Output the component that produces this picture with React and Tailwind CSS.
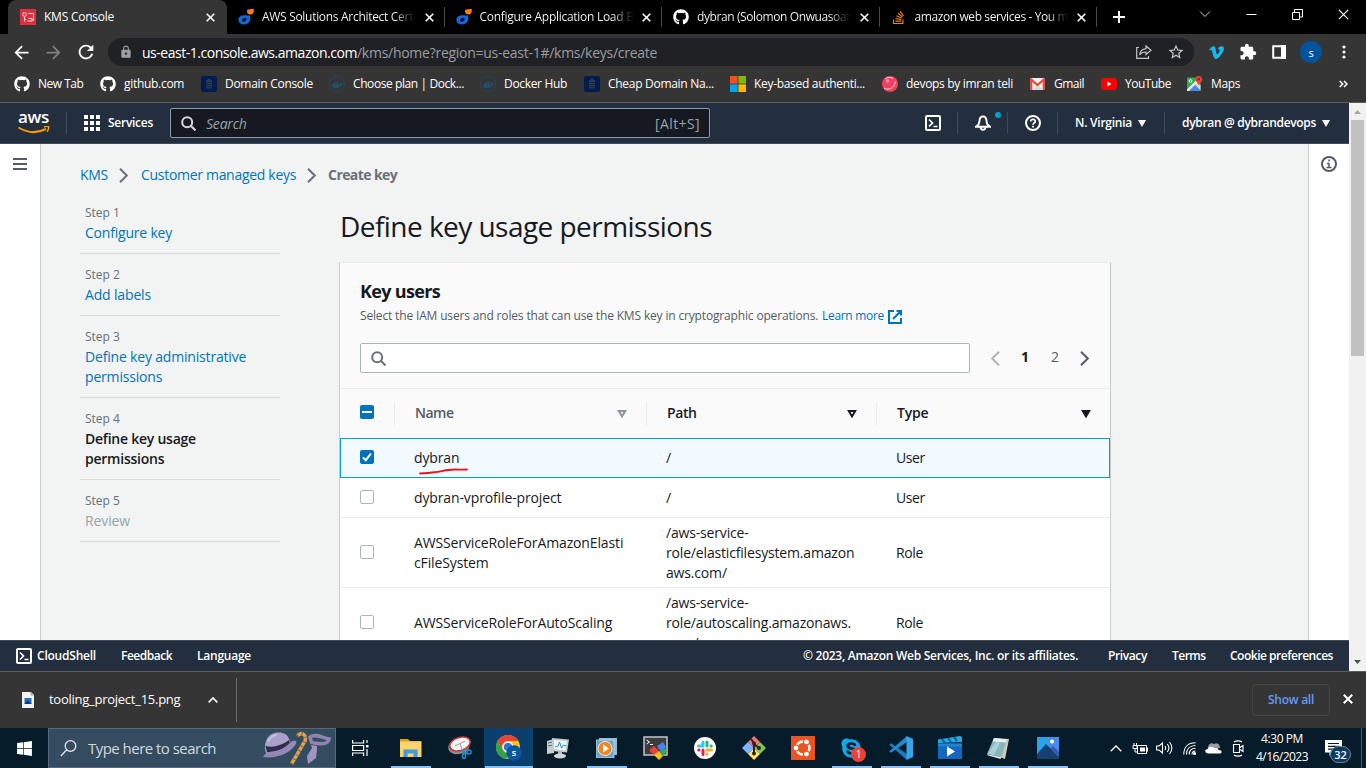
import { FaGithub, FaDocker, FaStackOverflow, FaSkype, FaVimeoV, FaWindows } from "react-icons/fa";
import { MdExtension, MdLock, MdRefresh, MdArrowBack, MdArrowForward, MdStarOutline } from "react-icons/md";

const DigitalDrop = () => (
  <svg width="16" height="16" viewBox="0 0 16 16">
    <path d="M12 6.300c1.400 4.500-.8 8.800-5.500 9.100C2.500 15.700 0 13.200.4 10.300.8 7.500 3.500 6.300 6.500 6.200 9 6.100 10 6.800 12 6.300z" fill="#0d6ae0" />
    <ellipse cx="6.300" cy="10.800" rx="2.500" ry="1.600" transform="rotate(-30 6.300 10.800)" fill="#000" />
    <path d="M9.500.8C12 .4 14.800-.3 15.700 0c.5 2.500-.3 5.300-3.200 5.500C9.300 5.700 8.200 2 9.500.8z" fill="#ff7a1a" />
  </svg>
);
const KmsIcon = () => (
  <svg width="16" height="16" viewBox="0 0 16 16" fill="none" stroke="#ffd5da" strokeWidth="1">
    <rect width="16" height="16" fill="#e0303f" stroke="none" />
    <circle cx="4.500" cy="5.500" r="1.800" />
    <path d="M4.500 7.500v5M4.500 10.500h1.300M8 4.500h5.500v7H12M7.500 12h4.500V9.500H8.500" />
  </svg>
);
const Cross = ({ c = "#fff", s = 9, w = 1.6 }) => (
  <svg width={s} height={s} viewBox="0 0 9 9" stroke={c} strokeWidth={w} fill="none"><path d="M.7.7l7.600 7.600M8.300.7L.7 8.300" /></svg>
);
const ShellIcon = () => (
  <svg width="16" height="16" viewBox="0 0 16 16" stroke="#fff" strokeWidth="2" fill="none">
    <rect x="1" y="1" width="14" height="14" rx="1" /><path d="M4 4.500L7.500 8 4 11.500M8.500 11.500h4" strokeWidth="1.700" />
  </svg>
);
const Magnifier = ({ c }) => (
  <svg width="15" height="15" viewBox="0 0 15 15" stroke={c} strokeWidth="2" fill="none"><circle cx="6.200" cy="6.200" r="5" /><path d="M10 10l4.500 4.500" /></svg>
);
const Database = () => (
  <svg width="16" height="16" viewBox="0 0 16 16">
    <rect width="16" height="16" rx="2" fill="#031b4e" />
    <path d="M5 4h6v8.500H5z" fill="#2e3d55" /><path d="M6.500 2.800h3V4h-3z" fill="#2e3d55" />
    <path d="M5 6.300h6M5 8.500h6M5 10.700h6" stroke="#031b4e" strokeWidth=".7" />
  </svg>
);
const DockerIcon = () => (
  <span className="flex h-4 w-4 items-center justify-center rounded-full border border-[#25475c] text-[11px] text-[#25506c]"><FaDocker /></span>
);
const Microsoft = () => (
  <svg width="16" height="16" viewBox="0 0 16 16">
    <path d="M0 0h7.600v7.600H0z" fill="#f25022" /><path d="M8.400 0H16v7.600H8.400z" fill="#7fba00" />
    <path d="M0 8.400h7.600V16H0z" fill="#00a4ef" /><path d="M8.400 8.400H16V16H8.400z" fill="#ffb900" />
  </svg>
);
const RedBall = () => (
  <svg width="16" height="16" viewBox="0 0 16 16">
    <circle cx="8" cy="8" r="8" fill="#f4405f" />
    <path d="M2 12c4 3 11 0 11.500-7M3 3c2-2 6-2 8-.5" stroke="#ffd0d8" strokeWidth="1" fill="none" />
    <circle cx="5.500" cy="5" r="1.700" fill="#ff8da0" />
  </svg>
);
const Gmail = () => (
  <svg width="15" height="12" viewBox="0 0 15 12">
    <rect width="15" height="12" rx="1" fill="#f2f2f2" /><path d="M2 12l5.500-5L13 12z" fill="#d8d8d8" />
    <path d="M1.200 12V1.500L7.500 7l6.300-5.500V12" stroke="#e04a3f" strokeWidth="2.200" fill="none" />
  </svg>
);
const YouTube = () => (
  <svg width="16" height="12" viewBox="0 0 16 12"><rect width="16" height="12" rx="3" fill="#f00" /><path d="M6.400 3.500v5l4-2.500z" fill="#fff" /></svg>
);
const Maps = () => (
  <svg width="16" height="16" viewBox="0 0 16 16">
    <rect x="0" y="1.500" width="13.500" height="13.500" rx="1" fill="#34a853" />
    <path d="M0 13.500L12 1.500l2 2L2 15H0z" fill="#f5f5f5" />
    <path d="M8 9l5.500 5.500V9L10 7z" fill="#dcdcdc" /><path d="M2 15l6-6 6 6z" fill="#4a89f3" />
    <path d="M11.800 0a3.400 3.400 0 013.400 3.400c0 2.500-2.700 3-3.400 6.400-.7-3.400-3.400-3.900-3.400-6.400A3.400 3.400 0 0111.800 0z" fill="#ea4335" />
    <circle cx="11.800" cy="3.300" r="1.200" fill="#8c1f16" />
    <circle cx="3.500" cy="5" r="1.400" fill="none" stroke="#fff" />
  </svg>
);

const tabs = [
  { icon: <DigitalDrop />, t: "AWS Solutions Architect Certi", k: "tracking-[-0.3px]" },
  { icon: <DigitalDrop />, t: "Configure Application Load B", k: "tracking-[-0.28px]" },
  { icon: <FaGithub size={16} />, t: "dybran (Solomon Onwuasoan", k: "tracking-[-0.4px]" },
  { icon: <FaStackOverflow size={15} color="#e8822a" />, t: "amazon web services - You m", k: "tracking-[-0.4px]" },
];
const marks = [
  { w: "w-[86px]", icon: <FaGithub size={16} />, t: "New Tab", k: "tracking-[-0.5px]" },
  { w: "w-[101px]", icon: <FaGithub size={16} />, t: "github.com", k: "tracking-[-0.3px]" },
  { w: "w-[128px]", icon: <Database />, t: "Domain Console", k: "tracking-[-0.29px]" },
  { w: "w-[151px]", icon: <DockerIcon />, t: "Choose plan | Dock...", k: "tracking-[-0.41px]" },
  { w: "w-[104px]", icon: <DockerIcon />, t: "Docker Hub", k: "tracking-[-0.33px]" },
  { w: "w-[146px]", icon: <Database />, t: "Cheap Domain Na...", k: "tracking-[-0.29px]" },
  { w: "w-[152px]", icon: <Microsoft />, t: "Key-based authenti...", k: "tracking-[-0.31px]" },
  { w: "w-[148px]", icon: <RedBall />, t: "devops by imran teli", k: "tracking-[-0.31px]" },
  { w: "w-[71px]", icon: <Gmail />, t: "Gmail", k: "tracking-[-0.5px]" },
  { w: "w-[86px]", icon: <YouTube />, t: "YouTube", k: "tracking-[-0.48px]" },
  { w: "w-[60px]", icon: <Maps />, t: "Maps", k: "tracking-[-0.38px]" },
];

function Browser() {
  return (
    <div className="shrink-0 text-[12px] text-white">
      <div className="flex h-[34px] items-stretch bg-black pl-2">
        <div className="flex w-[219px] items-center rounded-t-lg bg-[#353535] pl-3">
          <KmsIcon />
          <span className="ml-2 flex-1 tracking-[-0.24px]">KMS Console</span>
          <span className="mr-3"><Cross /></span>
        </div>
        {tabs.map((x, i) => (
          <div key={i} className="flex w-[217.500px] items-center pl-[11px]">
            <span className="w-6 shrink-0">{x.icon}</span>
            <span className={"w-[156px] overflow-hidden bg-gradient-to-r from-white from-85% to-black bg-clip-text whitespace-nowrap text-transparent " + x.k}>{x.t}</span>
            <span className="ml-[6.500px]"><Cross /></span>
            <span className="ml-[10px] h-5 w-px bg-[#4a4a4a]" />
          </div>
        ))}
        <div className="flex flex-1 items-center">
          <svg className="ml-[16px]" width="12" height="12" stroke="#fff" strokeWidth="2"><path d="M6 0v12M0 6h12" /></svg>
          <div className="mb-[6px] ml-auto flex items-center">
            <svg className="mr-[35px]" width="12" height="7" stroke="#ccc" fill="none"><path d="M1 .5l5 5 5-5" /></svg>
            <svg className="mr-[35px]" width="11" height="10" stroke="#fff" fill="none"><path d="M.5 5.500h10" /></svg>
            <svg className="mr-[35px]" width="11" height="11" stroke="#fff" fill="none"><path d="M.5 3.500h7v7h-7zM2.500 3V.5h8v7.500H8" /></svg>
            <span className="mr-[17.500px]"><Cross s={11} w={1} /></span>
          </div>
        </div>
      </div>
      <div className="flex h-[35px] items-center bg-[#353535] pt-1">
        <div className="flex w-[108px] items-center gap-[11px] pb-[3px] pl-[11px]">
          <MdArrowBack size={21} /><MdArrowForward size={21} color="#808080" /><MdRefresh size={22} />
        </div>
        <div className="mb-[3px] flex h-7 w-[1086px] items-center rounded-full bg-[#202124] pl-[11px] pr-[9px] text-[14px]">
          <MdLock size={14} color="#9aa0a6" />
          <span className="ml-[9px] w-[215px] whitespace-nowrap tracking-[-0.47px]">us-east-1.console.aws.amazon.com</span>
          <span className="flex-1 tracking-[-0.27px] text-[#9a9da1]">/kms/home?region=us-east-1#/kms/keys/create</span>
          <svg className="mr-[15px]" width="16" height="14" viewBox="0 0 16 14" stroke="#c4c7c5" strokeWidth="1.200" fill="none"><path d="M3 2.500H.7v10.800h11.800V11M10 1l5 4.300-5 4.200V7C7 7 5 8 3.700 10 4 6.500 6 4 10 3.600z" /></svg>
          <MdStarOutline size={18} color="#c4c7c5" />
        </div>
        <div className="flex flex-1 items-center pb-[3px] pl-[14px]">
          <FaVimeoV size={17} color="#1ab7ea" />
          <MdExtension className="ml-[14px]" size={18} />
          <svg className="ml-[15px]" width="14" height="14"><path d="M1.200 1.200h11.600v11.600H1.200z" stroke="#fff" strokeWidth="2" fill="none" /><path d="M9 0h5v14H9z" fill="#fff" /></svg>
          <span className="ml-[14px] flex h-[22px] w-[22px] items-center justify-center rounded-full bg-[#00539c] text-[11px] leading-none">s</span>
          <svg className="ml-[20px]" width="4" height="14" fill="#fff"><circle cx="2" cy="2" r="1.600" /><circle cx="2" cy="7" r="1.600" /><circle cx="2" cy="12" r="1.600" /></svg>
        </div>
      </div>
      <div className="flex h-[34px] items-center border-b border-[#5c5c5c] bg-[#353535] pl-[14px] pb-[3px]">
        {marks.map((m, i) => (
          <div key={i} className={"flex shrink-0 items-center whitespace-nowrap " + m.w}>
            <span className="flex w-6 shrink-0">{m.icon}</span><span className={m.k}>{m.t}</span>
          </div>
        ))}
        <svg className="mr-[18px] ml-auto" width="9" height="8" stroke="#fff" strokeWidth="1.500" fill="none"><path d="M.7 1l3 3-3 3M5 1l3 3-3 3" /></svg>
      </div>
    </div>
  );
}

const Caret = () => <svg className="ml-[6px]" width="8" height="7" fill="#fff"><path d="M0 0h8L4 7z" /></svg>;
const Sep = () => <span className="block h-[22px] w-px bg-[#3f4b59]" />;

function AwsHeader() {
  return (
    <div className="flex h-[41px] shrink-0 items-center border-b border-[#414d5c] bg-[#232f3e] text-[12px] font-semibold text-white">
      <div className="flex w-[66px] flex-col items-start pl-[18px]">
        <span className="-mt-[3px] h-[16px] text-[17px] leading-[13px] font-semibold tracking-[-0.3px]">aws</span>
        <svg width="32" height="8" viewBox="0 0 32 8" fill="none" stroke="#ff9900"><path d="M.5 1.500c9 5.500 19 5.800 27.500 1.500" strokeWidth="2" /><path d="M26 1c2-.8 4-.8 4.500-.3s0 3-1.500 5" strokeWidth="1.500" /></svg>
      </div>
      <Sep />
      <svg className="ml-[17px]" width="16" height="16" fill="#fff">
        {[0, 6, 12].map((x) => [0, 6, 12].map((y) => <rect key={x + "-" + y} x={x} y={y} width="4" height="4" />))}
      </svg>
      <span className="ml-2 w-[62px] tracking-[-0.27px]">Services</span>
      <div className="flex h-[30px] w-[540px] items-center rounded-[2px] border border-[#8d9aa5] bg-[#161922] pr-[9px] pl-[10px] text-[14px] font-normal text-[#95a5a6]">
        <Magnifier c="#d5dbdb" /><span className="ml-[10px] flex-1 tracking-[-0.2px] italic">Search</span><span className="tracking-[0.4px]">[Alt+S]</span>
      </div>
      <div className="ml-auto flex items-center">
        <ShellIcon />
        <span className="ml-4"><Sep /></span>
        <span className="relative ml-[17px] flex">
          <svg width="16" height="16" viewBox="0 0 16 16" stroke="#fff" strokeWidth="1.900" fill="none"><path d="M1 11.700c2.300-1.300 3.300-2.700 3.400-5.200C4.500 3.500 5.700 1.500 8 1.500s3.500 2 3.600 5c.1 2.500 1.100 3.900 3.400 5.200zM5.500 12.500c.3 3 4.700 3 5 0" /></svg>
          <span className="absolute -top-[3px] left-[20px] h-[6px] w-[6px] rounded-full bg-[#00a1c9]" />
        </span>
        <span className="ml-[16px]"><Sep /></span>
        <svg className="ml-[17px]" width="16" height="16" viewBox="0 0 16 16" stroke="#fff" strokeWidth="2" fill="none"><circle cx="8" cy="8" r="7" /><path d="M5.700 6.500C5.600 3.800 10.300 3.700 10.300 6.300 10.300 8 8 8 8 9.700M8 10.800v1.700" strokeWidth="1.700" /></svg>
        <span className="ml-4"><Sep /></span>
        <span className="ml-[17px] flex w-[89px] items-center tracking-[-0.25px]">N. Virginia<Caret /></span>
        <Sep />
        <span className="ml-[17px] flex items-center whitespace-nowrap tracking-[-0.32px]">dybran @ dybrandevops<Caret /></span>
        <span className="w-[19px]" />
      </div>
    </div>
  );
}

const Chevron = ({ c = "#687078", left }) => (
  <svg className="shrink-0" width="9" height="15" viewBox="0 0 9 15" stroke={c} strokeWidth="2" fill="none"><path d={left ? "M8 .8L1.200 7.500 8 14.200" : "M1 .8l6.800 6.700L1 14.200"} /></svg>
);

const steps = [
  { n: "Step 1", l: ["Configure key"], c: "text-[#0073bb] tracking-[-0.21px]" },
  { n: "Step 2", l: ["Add labels"], c: "text-[#0073bb] tracking-[-0.16px]" },
  { n: "Step 3", l: ["Define key administrative", "permissions"], c: "text-[#0073bb] tracking-[-0.18px]" },
  { n: "Step 4", l: ["Define key usage", "permissions"], c: "text-[#16191f] font-semibold tracking-[-0.24px]" },
  { n: "Step 5", l: ["Review"], c: "text-[#95a5a6] tracking-[-0.12px]" },
];

const rows = [
  { h: "h-[40px]", name: ["dybran"], path: ["/"], type: "User", on: true },
  { h: "h-[40px]", name: ["dybran-vprofile-project"], path: ["/"], type: "User" },
  { h: "h-[70px]", name: ["AWSServiceRoleForAmazonElasti", "cFileSystem"], path: ["/aws-service-", "role/elasticfilesystem.amazon", "aws.com/"], type: "Role" },
  { h: "h-[70px]", name: ["AWSServiceRoleForAutoScaling"], path: ["/aws-service-", "role/autoscaling.amazonaws.", "com/"], type: "Role" },
];

function Row({ r }) {
  return (
    <div className={"flex shrink-0 items-center " + r.h + (r.on ? " border border-[#00a1c9] bg-[#f1faff] pl-[19px]" : " border-b border-[#eaeded] bg-white pl-5")}>
      <span className={"mb-[2px] flex h-[14px] w-[14px] items-center justify-center rounded-[2px] " + (r.on ? "bg-[#0073bb]" : "border border-[#aab7b8] bg-white")}>
        {r.on && <svg width="10" height="10" stroke="#fff" strokeWidth="2" fill="none"><path d="M1 5.500l2.800 2.700L9 1.500" /></svg>}
      </span>
      <span className="relative ml-10 w-[252px] tracking-[-0.13px]">
        {r.name.map((t) => <div key={t}>{t}</div>)}
        {r.on && <svg className="absolute top-[19px] left-[5px]" width="50" height="8" fill="none" stroke="#f0101c" strokeWidth="1.800"><path d="M1 6.500c8-.3 10-.6 15-1.300 7-1 13-2.700 19-2.700 5 0 9 .2 13 0" strokeLinecap="round" /></svg>}
      </span>
      <span className="w-[230px] tracking-[-0.17px]">{r.path.map((t) => <div key={t}>{t}</div>)}</span>
      <span className="tracking-[-0.4px]">{r.type}</span>
    </div>
  );
}

const Sort = ({ c, fill = "none" }) => <svg width="10" height="8" viewBox="0 0 10 8" stroke={c} strokeWidth="2" fill={fill}><path d="M1.800 1h6.400L5 6.400z" /></svg>;

function Page() {
  return (
    <div className="flex min-h-0 flex-1 overflow-hidden bg-[#f2f3f3] text-[14px] leading-5 text-[#16191f]">
      <div className="w-[41px] shrink-0 border-r border-[#c8cdcd] bg-white pt-[14px] pl-[13px]">
        <svg width="14" height="12" stroke="#545b64" strokeWidth="2"><path d="M0 1h14M0 6h14M0 11h14" /></svg>
      </div>
      <div className="flex-1 pl-[39px]">
        <div className="mt-[21px] flex h-5 items-center text-[#0073bb]">
          <span className="mr-[11px] tracking-[-0.28px]">KMS</span><Chevron />
          <span className="mr-[11px] ml-[13px] tracking-[-0.3px]">Customer managed keys</span><Chevron />
          <span className="ml-[12px] font-bold tracking-[-0.59px] text-[#687078]">Create key</span>
        </div>
        <div className="flex">
          <div className="mt-[7px] w-[200px] shrink-0">
            {steps.map((s) => (
              <div key={s.n} className="border-b border-[#d5dbdb] pt-[11px] pb-[10px] pl-[5px]">
                <div className="text-[12px] text-[#687078]">{s.n}</div>
                {s.l.map((t) => <div key={t} className={s.c}>{t}</div>)}
              </div>
            ))}
          </div>
          <div className="ml-[59px] w-[772px]">
            <h1 className="mt-[21px] ml-px text-[28px] leading-[40px] tracking-[-0.54px]">Define key usage permissions</h1>
            <div className="mt-[16px] border border-t-[#eaeded] border-r-[#c8cdcd] border-l-[#c8cdcd] bg-[#fafafa]">
              <div className="px-5 pt-[17px]">
                <div className="text-[18px] leading-[22px] font-bold tracking-[-0.67px]">Key users</div>
                <div className="mt-[4px] flex items-center text-[12px] leading-[20px] text-[#545b64]">
                  <span className="w-[462px] whitespace-nowrap tracking-[-0.16px]">Select the IAM users and roles that can use the KMS key in cryptographic operations.</span>
                  <span className="tracking-[-0.3px] text-[#0073bb]">Learn more</span>
                  <svg className="mt-[2px] ml-[4px]" width="14" height="14" stroke="#0073bb" strokeWidth="2" fill="none"><path d="M6 1H1v12h12V8M8.500 1H13v4.500M12.500 1.500L5 9" /></svg>
                </div>
                <div className="mt-[17px] flex items-center">
                  <div className="flex h-[30px] w-[610px] items-center rounded-[2px] border border-[#aab7b8] bg-white pl-[10px]"><Magnifier c="#687078" /></div>
                  <span className="ml-[21px]"><Chevron c="#aab7b8" left /></span>
                  <span className="ml-[21px] w-[30px] pb-[2px] font-bold">1</span>
                  <span className="w-[29px] pb-[2px] text-[#545b64]">2</span>
                  <Chevron c="#545b64" />
                </div>
              </div>
              <div className="mt-[15px] flex h-[50px] items-center border-t border-[#eaeded] pl-5 font-semibold">
                <span className="mb-[3px] flex h-[14px] w-[14px] items-center justify-center rounded-[2px] bg-[#0073bb]"><span className="h-[2px] w-[10px] bg-white" /></span>
                <span className="ml-5 h-6 w-px bg-[#eaeded]" />
                <span className="ml-5 flex w-[212px] items-center justify-between tracking-[-0.5px] text-[#545b64]"><span className="mb-px">Name</span><Sort c="#879596" /></span>
                <span className="ml-[19px] h-6 w-px bg-[#eaeded]" />
                <span className="ml-5 flex w-[190px] items-center justify-between tracking-[-0.4px]"><span className="mb-px">Path</span><Sort c="#16191f" /></span>
                <span className="ml-[19px] h-6 w-px bg-[#eaeded]" />
                <span className="ml-5 flex w-[194px] items-center justify-between tracking-[-0.2px]"><span className="mb-px">Type</span><Sort c="#16191f" fill="#16191f" /></span>
              </div>
              {rows.map((r) => <Row key={r.name[0]} r={r} />)}
            </div>
          </div>
        </div>
      </div>
      <div className="flex w-[41px] shrink-0 justify-center border-l border-[#c8cdcd] bg-white pt-[12px]">
        <svg width="16" height="16" viewBox="0 0 16 16" stroke="#545b64" strokeWidth="2" fill="none"><circle cx="8" cy="8" r="7" /><path d="M8 3.500v2M6 7.500h2V12M5.500 11.500h5" strokeWidth="1.500" /></svg>
      </div>
    </div>
  );
}

function Footer() {
  return (
    <div className="flex h-[31px] shrink-0 items-center border-t border-[#414d5c] bg-[#232f3e] pl-4 text-[12px] font-semibold whitespace-nowrap text-white">
      <ShellIcon />
      <span className="ml-[5px] w-[84px] tracking-[-0.22px]">CloudShell</span>
      <span className="w-[76px] tracking-[-0.49px]">Feedback</span>
      <span className="tracking-[-0.24px]">Language</span>
      <span className="ml-auto w-[305px] tracking-[-0.27px]">© 2023, Amazon Web Services, Inc. or its affiliates.</span>
      <span className="w-[64px] tracking-[-0.38px]">Privacy</span>
      <span className="w-[58px] tracking-[-0.5px]">Terms</span>
      <span className="w-[119px] tracking-[-0.49px]">Cookie preferences</span>
    </div>
  );
}

function Downloads() {
  return (
    <div className="flex h-[57px] shrink-0 items-center border-t border-[#5c5c5c] bg-[#353535] text-[13px] text-white">
      <svg className="ml-[22px]" width="12" height="16"><path d="M0 0h9l3 3v13H0z" fill="#f4f4f4" /><path d="M9 0v3h3" stroke="#999" fill="none" /><path d="M2.500 6h7v6h-7z" fill="#1d70c9" /><path d="M2.500 12l3-3.500 4 3.500z" fill="#0b3a73" /></svg>
      <span className="ml-[15px] w-[159px] tracking-[-0.26px]">tooling_project_15.png</span>
      <svg width="10" height="6" stroke="#fff" strokeWidth="1.700" fill="none"><path d="M.7 5.300L5 1l4.300 4.300" /></svg>
      <span className="ml-[18px] h-[44px] w-px bg-[#6b6b6b]" />
      <span className="mb-px ml-auto flex h-[32px] w-[78px] items-center justify-center rounded border border-[#444649] text-[12px] font-semibold tracking-[-0.26px] text-[#6699f5]">Show all</span>
      <span className="mr-[13px] mb-[2px] ml-[13px]"><Cross s={10} w={1.800} /></span>
    </div>
  );
}

const S = ({ children, w = 24, h = 24 }) => <svg width={w} height={h} viewBox={`0 0 ${w} ${h}`}>{children}</svg>;

const apps = [
  { bar: "w-10", icon: <S w={22} h={20}><path d="M0 1h8l2 2h11v15H0z" fill="#e0a10b" /><path d="M0 3.500h21.500V19H0z" fill="#fbd56b" /><path d="M3.500 19v-7.500h14V19h-4v-3.500h-6V19z" fill="#3f9bdc" /></S> },
  { icon: <S w={24} h={24}><ellipse cx="11" cy="10" rx="11" ry="8" transform="rotate(-18 11 10)" fill="#8b8e91" /><ellipse cx="12" cy="8" rx="10.500" ry="6.500" transform="rotate(-18 12 8)" fill="#f5f5f5" stroke="#c9343c" strokeWidth="1.500" /><path d="M7 10l10-5M12 8l3 7" stroke="#999" /><path d="M13 14l7 4M20 13l-5 6" stroke="#2a8bcb" strokeWidth="1.500" /><circle cx="21" cy="16" r="2" fill="none" stroke="#2a8bcb" strokeWidth="1.500" /><ellipse cx="16" cy="20" rx="1.600" ry="2.500" fill="none" stroke="#2a8bcb" strokeWidth="1.500" /></S> },
  { bar: "w-12", active: true, icon: <S w={26} h={26}><circle cx="12" cy="12" r="12" fill="#fbc116" /><path d="M1.600 6A12 12 0 0122.400 6H12a6 6 0 00-5.200 9z" fill="#ea4335" /><path d="M1.600 6l5.200 9a6 6 0 006.500 2.900L10 23.900A12 12 0 011.600 6z" fill="#2ea34f" /><circle cx="12" cy="12" r="5.500" fill="#fff" /><circle cx="12" cy="12" r="4.300" fill="#2a78e4" /><circle cx="18" cy="18" r="7.700" fill="#0a579d" /><text x="18" y="21" textAnchor="middle" fontSize="9" fontWeight="600" fontFamily="Open Sans" fill="#fff">s</text></S> },
  { icon: <S w={24} h={22}><path d="M1 4l7-2v14l-7 1z" fill="#c9cdcb" /><path d="M2 6l5-1M2 9l5-1" stroke="#4a7a5a" /><path d="M6 1l17 1.500-2 13L6 14z" fill="#c5cacb" /><path d="M8 3l13 1-1.500 9.500L8 12.300z" fill="#edf6fa" /><path d="M9 10l3-1 1.500-4 2 6 2-3 3 1" stroke="#368fbd" fill="none" /><path d="M12 14h4v4h-4z" fill="#b5baba" /><ellipse cx="14" cy="19" rx="6" ry="2.500" fill="#d4d8d8" /></S> },
  { bar: "w-10", icon: <S w={22} h={20}><path d="M3 0h18v17H3z" fill="#93b9d2" /><path d="M0 2h18v18H0z" fill="#6ba5ca" stroke="#bcdcec" strokeWidth=".8" /><circle cx="9" cy="10.500" r="7" fill="#f58220" stroke="#fff" strokeWidth=".8" /><path d="M7 6.500v8l6-4z" fill="#fff" /></S> },
  { icon: <S w={25} h={24}><path d="M1 1h23v18H1z" fill="#3c3c3e" stroke="#c4c4c4" strokeWidth="1.500" /><path d="M3.500 4l3 2-3 2M7 8.500h3" stroke="#fff" fill="none" /><path d="M7 13l4-3 6 6-3 4-7-4z" fill="#ea4335" /><path d="M14 10l6-4 3 5-5 5z" fill="#4285f4" /><path d="M11 19l5-4 4 5-4 4z" fill="#fbc116" /><path d="M17 16l5-4 2 4-5 4z" fill="#34a853" /></S> },
  { icon: <S w={22} h={22}><circle cx="11" cy="11" r="11" fill="#fff" /><g strokeWidth="3" strokeLinecap="round"><path d="M9 5v4M4.500 9h4" stroke="#36c5f0" /><path d="M13 5v4M17 9h.3" stroke="#2eb67d" /><path d="M13 13h4.500M13 17v.3" stroke="#ecb22e" /><path d="M9 13v4.500M4.800 13H5" stroke="#e01e5a" /></g></S> },
  { icon: <S w={24} h={24}><path d="M12 0l6 6-6 6-6-6z" fill="#f2767a" /><path d="M6 6l6 6-6 6-6-6z" fill="#80b3ff" /><path d="M18 6l6 6-6 6-6-6z" fill="#7fc659" /><path d="M12 12l6 6-6 6-6-6z" fill="#ffe06e" /><path d="M9 3l3 4v11M12 8l5 4" stroke="#30231d" strokeWidth="2" fill="none" /><circle cx="12" cy="7.500" r="2" fill="#30231d" /><circle cx="17" cy="12" r="2" fill="#30231d" /><circle cx="12" cy="17.500" r="2" fill="#30231d" /></S> },
  { icon: <S w={24} h={24}><path d="M0 0h24v24H0z" fill="#e95420" /><circle cx="12" cy="12" r="6.500" stroke="#fff" strokeWidth="2.500" fill="none" /><g fill="#fff" stroke="#e95420" strokeWidth="1.200"><circle cx="5" cy="12" r="3" /><circle cx="15.500" cy="5.900" r="3" /><circle cx="15.500" cy="18.100" r="3" /></g></S> },
  { bar: "w-10", icon: <span className="relative flex"><FaSkype size={23} color="#14a7e8" /><span className="absolute top-[10px] left-[11px] flex h-[15px] w-[15px] items-center justify-center rounded-full bg-[#ee4136] text-[10px] leading-none text-white">1</span></span> },
  { bar: "w-10", icon: <S w={24} h={24}><path d="M17.500 0L24 3v18l-6.500 3L6 13.500 2 16.500.5 15.500v-7L2 7.500l4 3zM18 6.500L10.500 12l7.500 5.500z" fill="none" /><path d="M.5 8.300L2 7.200 18 18v6L.5 8.900z" fill="#1c7bc0" /><path d="M.5 15.700L2 16.800 18 6V0L.5 15.100z" fill="#2489ca" /><path d="M17.500 0L24 3v18l-6.500 3z" fill="#39a5e8" /></S> },
  { bar: "w-10", icon: <S w={24} h={24}><path d="M0 7V3.500L22 0l2 1v5z" fill="#2aa8e0" /><path d="M4 3l3 4M10 2l3 4M16 1l3 4" stroke="#0b5a9c" strokeWidth="2" /><path d="M0 7.500h24V23H0z" fill="#1566c0" /><path d="M0 7.500h24v3H0z" fill="#1c86d1" /><path d="M9 10.500v10l8-5z" fill="#fff" /></S> },
  { bar: "w-10", icon: <S w={23} h={22}><path d="M7 1l15 1-4 20-5-2z" fill="#cfcdb9" /><path d="M7 1l13 1.500L14.500 20 0 17z" fill="#86b7bd" /><path d="M7 1l13 1.500-1 3L5.500 4.500z" fill="#e5efef" /><path d="M9 5l4 .5L7 18l-6-1.500z" fill="#a9d0d4" /><path d="M0 17l14.500 3-1 2L1 18.500z" fill="#dce5e4" /></S> },
  { bar: "w-10", icon: <S w={22} h={22}><path d="M0 0h22v22H0z" fill="#2ba3e8" /><path d="M12 22V0h10v22z" fill="#4c8ce8" /><path d="M0 22V17L9 7l13 13v2z" fill="#173f72" /><path d="M13 11.500l3-2.500 6 6v5z" fill="#2d5fae" /><circle cx="15" cy="4.500" r="2" fill="#fff" /></S> },
];

function Taskbar() {
  return (
    <div className="flex h-10 shrink-0 items-center bg-[#071c2b] text-white">
      <span className="flex w-12 justify-center"><FaWindows size={17} /></span>
      <div className="flex h-10 w-[288px] items-center border border-[#56697a] bg-[#344c60] pl-[11px]">
        <svg width="17" height="17" stroke="#e6e6e6" strokeWidth="1.300" fill="none"><circle cx="10.500" cy="6" r="5.300" /><path d="M6.800 9.800L.8 16" /></svg>
        <span className="ml-[11px] w-[175px] text-[15px] tracking-[-0.53px] text-[#d3d9de]">Type here to search</span>
        <svg width="68" height="36" viewBox="0 0 68 36">
          <path d="M2 20C1 9 7 3 14 2.500c6-.5 11 1 13 9l-1 6c-7 6-16 9-22 8z" fill="#a99fc9" />
          <path d="M5 12c1-4 5-7 9-7" stroke="#c6bfe0" strokeWidth="2" fill="none" />
          <path d="M2.500 16c8 2 17-1 23.500-6l1.500 5C20 21 11 24 4 22z" fill="#2f2c4c" />
          <path d="M0 27c2-4 5-5 9-5.500 9-1 15-5 19-10 5-2 7 0 4 4C26 24 12 29 0 27z" fill="#9388b6" />
          <path d="M28.500 34L42 11c2-6-3-10-8-5" stroke="#d9a159" strokeWidth="3.500" fill="none" /><path d="M28.500 34L42 11c2-6-3-10-8-5" stroke="#8a5e2c" strokeWidth="3.500" strokeDasharray="1 4" fill="none" />
          <path d="M49 14l-2-7c5-4 13 1 19 2-1 6-8 5-16 4" stroke="#8f84b0" strokeWidth="3.500" fill="none" />
          <path d="M48 15l6 1v4l-1 8-8 6-1-8 5-8z" fill="#a095c0" />
        </svg>
      </div>
      <span className="flex w-[50px] justify-center pr-[1px]">
        <svg width="17" height="16" stroke="#fff" strokeWidth="1.200" fill="none"><path d="M.6 0v3h11V0M.6 16v-3h11v3M.6 5.500h11v5H.6zM15 0v3M15 9v7" /><path d="M14 5h2.500v2.500H14z" fill="#fff" stroke="none" /></svg>
      </span>
      <div className="flex h-10">
        {apps.map((a, i) => (
          <div key={i} className={"flex h-10 w-[49px] flex-col items-center " + (a.active ? "bg-[#0a3f6e]" : "")}>
            <span className="flex h-[38px] items-center pt-[2px]">{a.icon}</span>
            {a.bar && <span className={"h-[2px] bg-[#86c3f2] " + a.bar} />}
          </div>
        ))}
      </div>
      <div className="ml-auto flex items-center">
        <svg width="12" height="7" stroke="#fff" strokeWidth="1.300" fill="none"><path d="M.7 6.300L6 1l5.300 5.300" /></svg>
        <svg className="ml-[10px]" width="17" height="13" stroke="#fff" fill="none"><path d="M5.500 3.500h9v8h-9zM15.500 5.500v4M1 3.500h4v3H1zM2 1v2M4.500 1v2M3 7v3h2" /><path d="M8 5.500h5v4H8z" fill="#fff" stroke="none" /></svg>
        <svg className="ml-[7px]" width="17" height="14" stroke="#fff" strokeWidth="1.100" fill="none"><path d="M.6 5h2.500L6.500 2v10L3.100 9H.6zM9 5c1 1.500 1 2.500 0 4M11.300 3c2 2.500 2 5.500 0 8M13.600 1c3 4 3 8 0 12" /></svg>
        <svg className="ml-[10px]" width="13" height="13" stroke="#fff" strokeWidth="1.100" fill="none"><path d="M.8 12.500C.8 5 5 .8 12.500.8M3.500 12.500C3.500 7 7 3.500 12.500 3.500M6.200 12.500c0-4 2.300-6.300 6.300-6.300M9 12.500c0-2 1.500-3.500 3.500-3.500" /><circle cx="11.500" cy="11.500" r="1" fill="#fff" /></svg>
        <svg className="ml-[9px]" width="17" height="12"><path d="M3 8C2 3 6 0 9 2c4-2 6 1 6 4z" fill="#9a9a9a" /><path d="M3.500 11.500C-.5 11.500-1 7 3 7c1-3 5-3 6.500-.5 2-1 4 0 4 1.500 4 0 4 3.500 1 3.500z" fill="#fff" /></svg>
        <svg className="ml-[10px]" width="12" height="17" stroke="#fff" strokeWidth="1.100" fill="none"><path d="M1.500 4.500h6v8h-6zM8 7.500l3-2v6L8 9.500M2 2c2-1.500 6-1.500 8 0M2 15c2 1.500 6 1.500 8 0" /></svg>
        <div className="ml-[8px] flex w-[60px] flex-col items-center text-[12px] leading-[18px]"><span className="tracking-[-0.41px]">4:30 PM</span><span className="tracking-[-0.54px]">4/16/2023</span></div>
        <span className="relative ml-[13px] flex w-[36px]">
          <svg width="17" height="16"><path d="M0 0h17v12.500H8L4.500 16v-3.500H0z" fill="#fff" /><path d="M3 3.500h11M3 6.300h11M3 9.100h11" stroke="#071c2b" strokeWidth="1.200" /></svg>
          <span className="absolute top-[6px] left-[5px] flex h-[17px] w-[21px] items-center justify-center rounded-full border border-[#6d8ba3] bg-[#0b3a5c] text-[11px] leading-none font-semibold">32</span>
        </span>
        <span className="mr-[4px] h-10 w-px bg-[#4b5b68]" />
      </div>
    </div>
  );
}

export default function App() {
  return (
    <div className="flex h-[768px] w-[1366px] flex-col overflow-hidden bg-black font-['Open_Sans',sans-serif]">
      <Browser />
      <div className="flex h-[568px] shrink-0">
        <div className="flex w-[1349px] flex-col"><AwsHeader /><Page /><Footer /></div>
        <div className="flex w-[17px] flex-col items-center bg-[#f1f1f1]">
          <svg className="mt-[7px]" width="7" height="4" fill="#a3a3a3"><path d="M0 4h7L3.500 0z" /></svg>
          <div className="mt-[6px] h-[236px] w-[13px] bg-[#c1c1c1]" />
          <svg className="mt-auto mb-[7px]" width="7" height="4" fill="#505050"><path d="M0 0h7L3.500 4z" /></svg>
        </div>
      </div>
      <Downloads />
      <Taskbar />
    </div>
  );
}
